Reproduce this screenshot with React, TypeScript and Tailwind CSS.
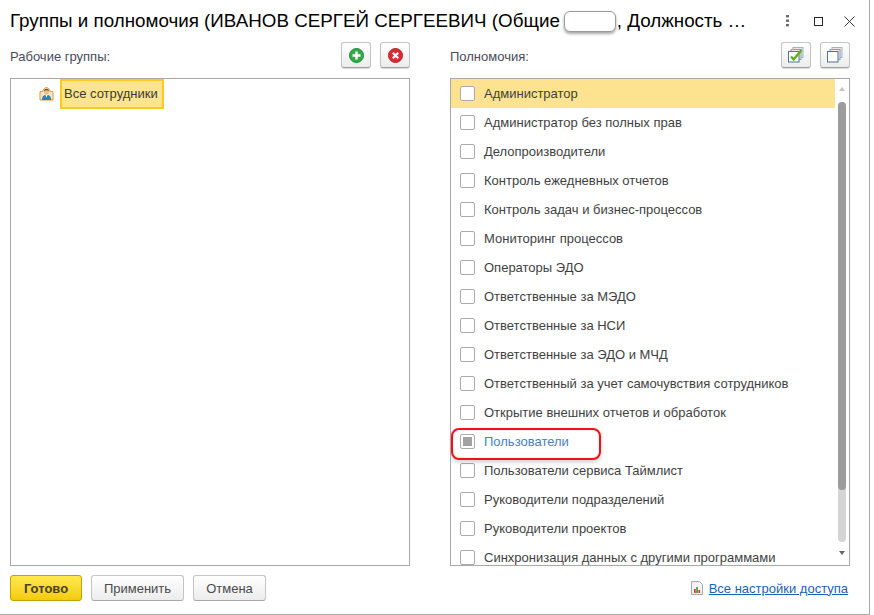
import React from 'react';

const rows = [
  'Администратор',
  'Администратор без полных прав',
  'Делопроизводители',
  'Контроль ежедневных отчетов',
  'Контроль задач и бизнес-процессов',
  'Мониторинг процессов',
  'Операторы ЭДО',
  'Ответственные за МЭДО',
  'Ответственные за НСИ',
  'Ответственные за ЭДО и МЧД',
  'Ответственный за учет самочувствия сотрудников',
  'Открытие внешних отчетов и обработок',
  'Пользователи',
  'Пользователи сервиса Таймлист',
  'Руководители подразделений',
  'Руководители проектов',
  'Синхронизация данных с другими программами',
];

const IconButton: React.FC<{ children: React.ReactNode }> = ({ children }) => (
  <button className="w-[30px] h-[26px] flex items-center justify-center rounded-[3px] border border-[#c4c4c4] border-b-[#a0a0a0] bg-gradient-to-b from-white to-[#ececec] shadow-[0_1px_1px_rgba(0,0,0,0.15)]">
    {children}
  </button>
);

const FooterButton: React.FC<{ label: string; className: string }> = ({ label, className }) => (
  <button className={`h-[26px] pt-[1px] flex items-center justify-center rounded-[3px] border border-[#c4c4c4] border-b-[#a8a8a8] bg-gradient-to-b from-white to-[#ececec] text-[13px] text-[#4a4a4a] ${className}`}>
    {label}
  </button>
);

const StackIcon: React.FC<{ checked?: boolean }> = ({ checked }) => (
  <svg width="16" height="16" viewBox="0 0 16 16" fill="none">
    <rect x="5" y="0.500" width="10" height="10" fill="#dfe7ee" stroke="#a3b6c6" />
    <rect x="3" y="2.500" width="10" height="10" fill="#e8eef3" stroke="#8aa3b8" />
    <rect x="0.500" y="4.500" width="10.500" height="10.500" fill="#fff" stroke="#4f7390" />
    {checked && <path d="M3 9.500l2.700 3L13.500 3" stroke="#5cb01e" strokeWidth="2.400" />}
  </svg>
);

const App: React.FC = () => {
  return (
    <div className="w-[874px] h-[615px] bg-white font-['Liberation_Sans',Arial,sans-serif]">
      <div className="w-[870px] h-[615px] border-r border-b border-[#a8a8a8] flex flex-col">
        {/* Title */}
        <div className="h-[42px] shrink-0 pl-[10px] flex items-center">
          <div className="w-[757px] text-[18.8px] leading-[24px] text-black whitespace-nowrap flex items-center">
            Группы и полномочия (ИВАНОВ СЕРГЕЙ СЕРГЕЕВИЧ (Общие
            <span className="inline-block w-[52px] h-[21px] ml-[4px] mr-[1px] rounded-[6px] bg-white border border-[#9a9a9a] shadow-[0_2px_3px_rgba(0,0,0,0.35)]" />
            , Должность …
          </div>
          <svg className="ml-[18px]" width="6" height="14" viewBox="0 0 6 14" fill="#6a6a6a">
            <rect x="1" y="1" width="3" height="2.400" />
            <rect x="1" y="5.500" width="3" height="2.400" />
            <rect x="1" y="10" width="3" height="2.400" />
          </svg>
          <div className="ml-[23px] w-[9px] h-[9px] border border-[#222]" />
          <svg className="ml-[21px]" width="11" height="11" viewBox="0 0 11 11" stroke="#333" fill="none">
            <path d="M0.500 0.500l10 10M10.500 0.500l-10 10" />
          </svg>
        </div>

        {/* Columns */}
        <div className="px-[10px] grid grid-cols-[400px_400px] gap-x-[40px]">
          <div>
            <div className="h-[36px] flex items-start justify-between">
              <span className="mt-[7px] text-[13px] leading-[16px] text-[#4a4a5a]">Рабочие группы:</span>
              <div className="flex gap-[9px]">
                <IconButton>
                  <svg width="15" height="15" viewBox="0 0 15 15">
                    <circle cx="7.500" cy="7.500" r="7" fill="#35a84b" stroke="#1f8a38" />
                    <path d="M7.500 3.500v8M3.500 7.500h8" stroke="#fff" strokeWidth="2.400" />
                  </svg>
                </IconButton>
                <IconButton>
                  <svg width="15" height="15" viewBox="0 0 15 15">
                    <circle cx="7.500" cy="7.500" r="7" fill="#dc2a35" stroke="#c21d28" />
                    <path d="M4.800 4.800l5.400 5.400M10.200 4.800l-5.400 5.400" stroke="#fff" strokeWidth="2.200" />
                  </svg>
                </IconButton>
              </div>
            </div>
            <div className="h-[488px] border border-[#a8a8a8] pl-[28px] flex items-start">
              <div className="h-[29px] flex items-center">
                <svg width="15" height="15" viewBox="0 0 15 15">
                  <path d="M1 14V5.500h2.500C4.500 3 6 1.500 7.500 1.500S10.500 3 11.500 5.500H14V14z" fill="#fbe6c2" stroke="#d99a45" />
                  <circle cx="7.500" cy="5.500" r="2.600" fill="#eebd90" />
                  <path d="M4.900 5.500c0-1.800 1.200-2.800 2.600-2.800s2.600 1 2.600 2.800c-1-1-1.800-1.200-2.600-1.200s-1.600 .2-2.600 1.200z" fill="#6b4a2a" />
                  <path d="M2.800 14c0-3.400 2-5.200 4.700-5.200s4.700 1.800 4.700 5.200z" fill="#2f83bd" />
                  <path d="M6.500 8.900h2L7.500 11.500z" fill="#fff" />
                </svg>
              </div>
              <div className="ml-[6px] h-[30px] w-[104px] border-2 border-[#ffc91f] bg-[#ffe48f] pl-[2px] flex items-center text-[13px] text-[#3a3a3a]">
                Все сотрудники
              </div>
            </div>
          </div>

          <div>
            <div className="h-[36px] flex items-start justify-between">
              <span className="mt-[7px] text-[13px] leading-[16px] text-[#4a4a5a]">Полномочия:</span>
              <div className="flex gap-[9px]">
                <IconButton>
                  <StackIcon checked />
                </IconButton>
                <IconButton>
                  <StackIcon />
                </IconButton>
              </div>
            </div>
            <div className="relative h-[488px] border border-[#a8a8a8] flex overflow-hidden">
              <div className="w-[384px] shrink-0">
                {rows.map((row, i) => (
                  <div
                    key={row}
                    className={`h-[29px] pl-[9px] flex items-center ${i === 0 ? 'bg-[#fde38f]' : ''}`}
                  >
                    <div className="w-[15px] h-[15px] shrink-0 flex items-center justify-center rounded-[2px] border border-[#ababab] bg-white">
                      {i === 12 && <div className="w-[9px] h-[9px] bg-[#a3a3a3]" />}
                    </div>
                    <span className={`ml-[9px] mt-[1px] whitespace-nowrap text-[13px] ${i === 12 ? 'text-[#4a80bd]' : 'text-[#3f3f3f]'}`}>
                      {row}
                    </span>
                  </div>
                ))}
              </div>
              <div className="flex-1 flex flex-col items-center pt-[8px]">
                <div className="w-0 h-0 border-x-[3.500px] border-x-transparent border-b-[4px] border-b-[#c4c4c4]" />
                <div className="mt-[11px] w-[8px] h-[440px] rounded-full bg-[#d4d4d4]">
                  <div className="w-[8px] h-[388px] rounded-full bg-[#9c9c9c]" />
                </div>
                <div className="mt-[9px] w-0 h-0 border-x-[3.500px] border-x-transparent border-t-[4px] border-t-[#666]" />
              </div>
              {/* annotation */}
              <div className="absolute left-[0px] top-[349px] w-[150px] h-[32px] rounded-[8px] border-2 border-[#f01018] shadow-[0_2px_4px_rgba(0,0,0,0.2),inset_0_0_3px_rgba(0,0,0,0.12)]" />
            </div>
          </div>
        </div>

        {/* Footer */}
        <div className="mt-[9px] pl-[10px] pr-[21px] flex items-center">
          <FooterButton
            label="Готово"
            className="w-[72px] !border-[#c2a100] !from-[#ffe94d] !to-[#f2cc00] font-bold !text-[#4a4020]"
          />
          <FooterButton label="Применить" className="ml-[9px] w-[93px]" />
          <FooterButton label="Отмена" className="ml-[9px] w-[73px]" />
          <div className="ml-auto flex items-center">
            <svg width="12" height="14" viewBox="0 0 12 14">
              <path d="M0.500 0.500h8l3 3v10h-11z" fill="#f3f3f3" stroke="#a8a8a8" />
              <rect x="3" y="8" width="1.700" height="4" fill="#d9342b" />
              <rect x="5.200" y="6" width="1.700" height="6" fill="#3f9d3a" />
              <rect x="7.400" y="9" width="1.700" height="3" fill="#d9342b" />
            </svg>
            <a className="ml-[6px] mt-[1px] text-[13px] text-[#1c5fb8] underline">Все настройки доступа</a>
          </div>
        </div>
      </div>
    </div>
  );
};

export default App;
